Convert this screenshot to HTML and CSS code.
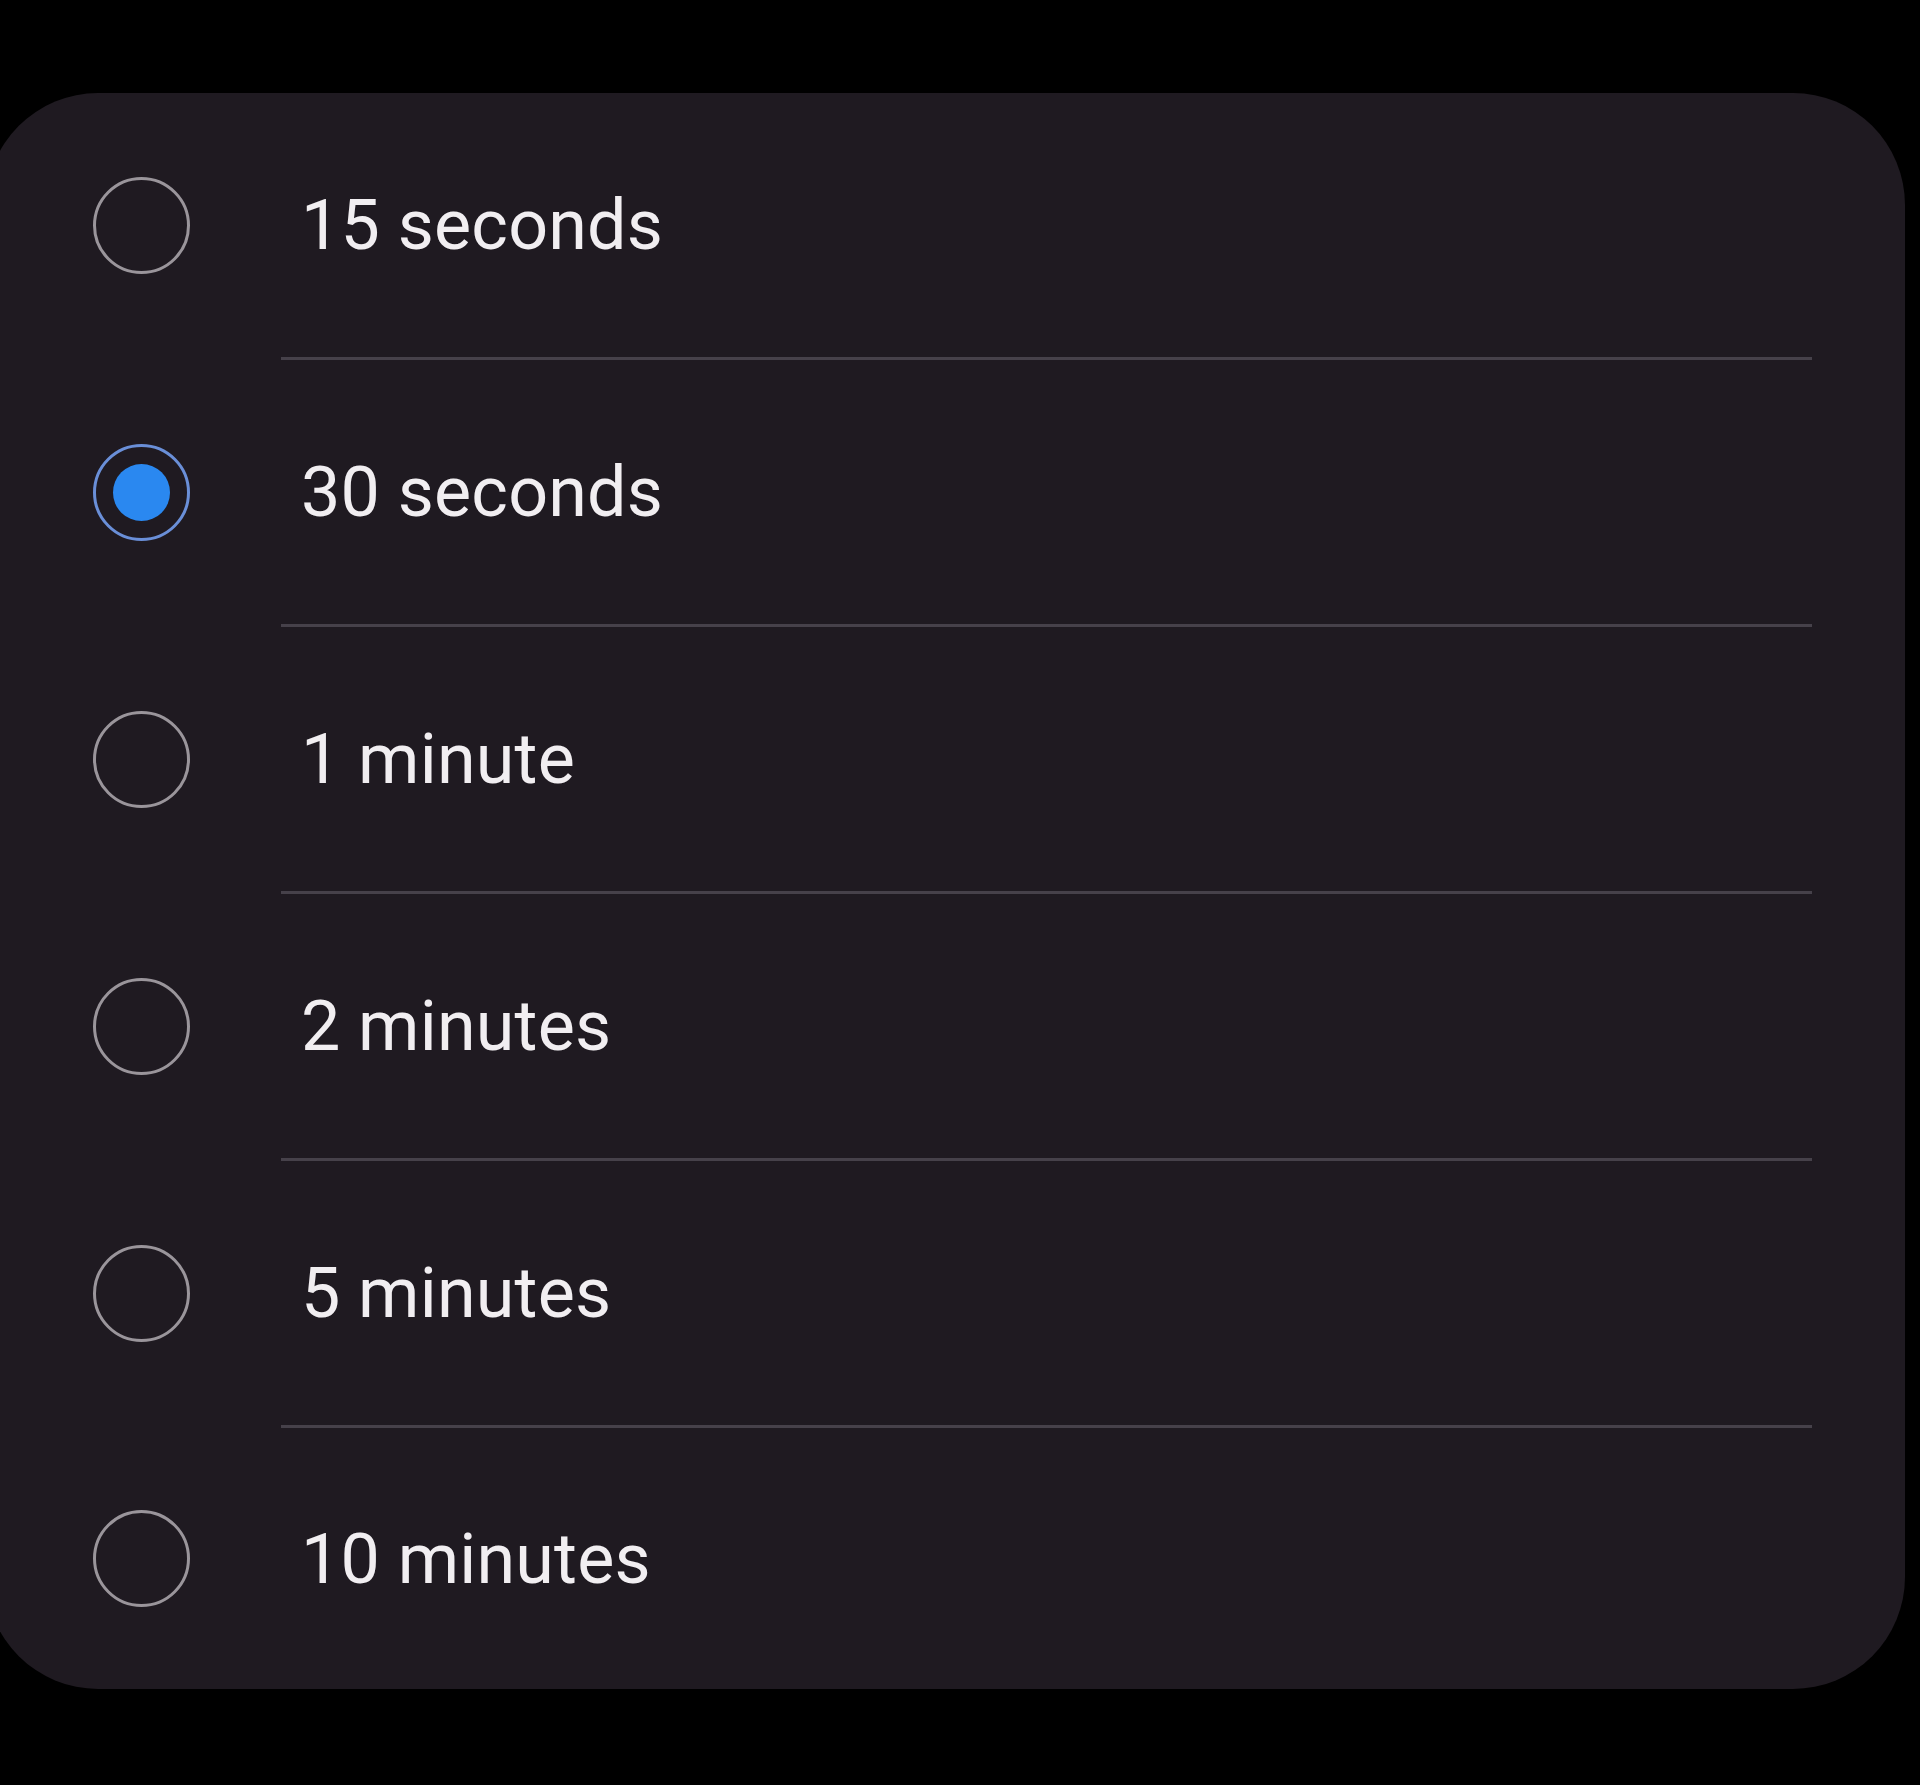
FILE: index.html
```html
<!DOCTYPE html>
<html lang="en">
<head>
<meta charset="utf-8">
<title>Screen timeout</title>
<link rel="stylesheet" href="styles.css">
</head>
<body>
  <div class="card">
    <div class="row">
      <span class="radio"></span>
      <span class="label">15 seconds</span>
    </div>
    <div class="sep"></div>
    <div class="row">
      <span class="radio radio--on"><span class="dot"></span></span>
      <span class="label">30 seconds</span>
    </div>
    <div class="sep"></div>
    <div class="row">
      <span class="radio"></span>
      <span class="label">1 minute</span>
    </div>
    <div class="sep"></div>
    <div class="row">
      <span class="radio"></span>
      <span class="label">2 minutes</span>
    </div>
    <div class="sep"></div>
    <div class="row">
      <span class="radio"></span>
      <span class="label">5 minutes</span>
    </div>
    <div class="sep"></div>
    <div class="row">
      <span class="radio"></span>
      <span class="label">10 minutes</span>
    </div>
  </div>
</body>
</html>
```

FILE: styles.css
```css
html, body {
  margin: 0;
  padding: 0;
  background: #000;
}

body {
  width: 1920px;
  height: 1785px;
  overflow: hidden;
  padding-top: 93px;
  box-sizing: border-box;
  font-family: Roboto, "Noto Sans", "Liberation Sans", sans-serif;
}

.card {
  margin-left: -14px;
  width: 1919px;
  background: #1f1a21;
  border-radius: 112px;
  display: flex;
  flex-direction: column;
}

.row {
  height: 264px;
  display: flex;
  align-items: center;
  padding-left: 107px;
}

.row:last-child {
  height: 261px;
}

.radio {
  width: 97px;
  height: 97px;
  box-sizing: border-box;
  border-radius: 50%;
  border: 3.5px solid #9a959b;
  display: flex;
  align-items: center;
  justify-content: center;
  flex: none;
}

.radio--on {
  border-color: #6a8fd8;
}

.dot {
  width: 57px;
  height: 57px;
  border-radius: 50%;
  background: #2a88f0;
}

.label {
  margin-left: 111px;
  font-size: 70px;
  line-height: 1;
  color: #f1eef1;
  letter-spacing: 0.2px;
}

.sep {
  height: 3px;
  margin-left: 295px;
  margin-right: 93px;
  background: #46414a;
}
```
